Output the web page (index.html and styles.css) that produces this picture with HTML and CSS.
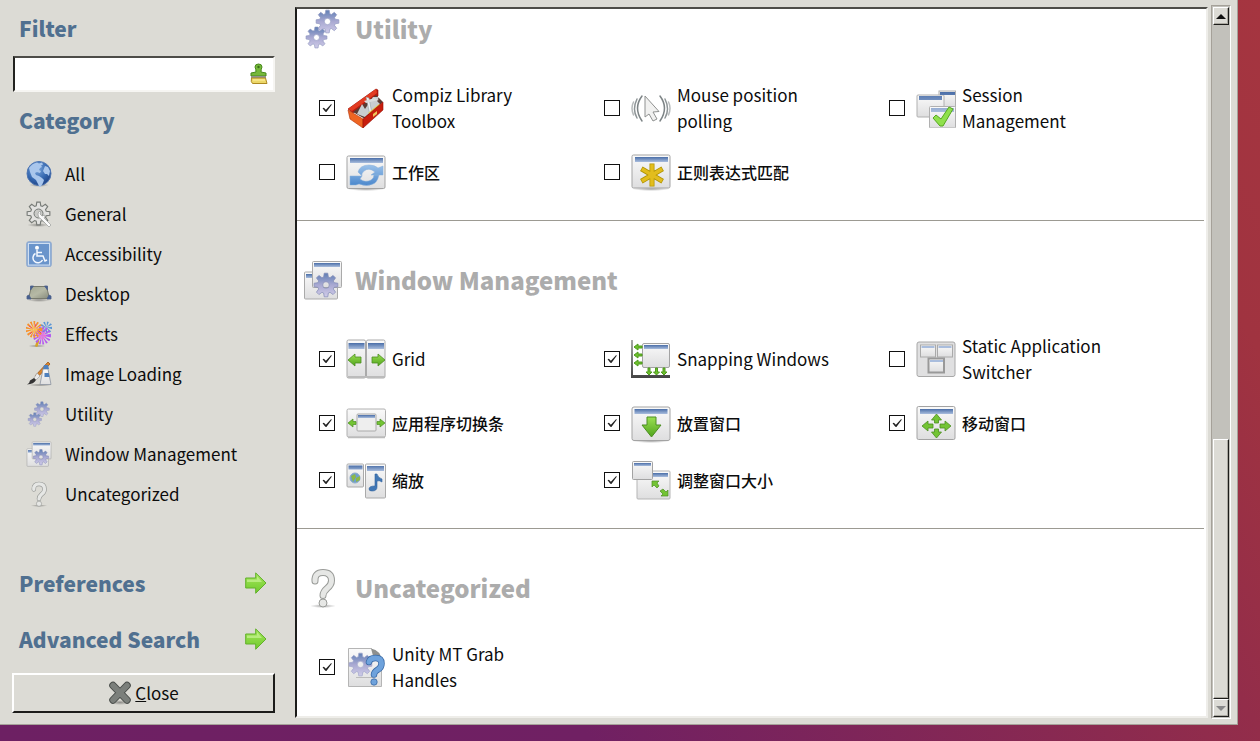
FILE: index.html
```html
<!DOCTYPE html>
<html lang="en">
<head>
<meta charset="utf-8">
<title>CompizConfig Settings Manager</title>
<link rel="stylesheet" href="styles.css">
</head>
<body>
<svg class="defs" aria-hidden="true">
  <defs>
    <linearGradient id="paper" x1="0" y1="0" x2="0" y2="1"><stop offset="0" stop-color="#fafafa"/><stop offset="1" stop-color="#dededf"/></linearGradient>
    <linearGradient id="bar" x1="0" y1="0" x2="0" y2="1"><stop offset="0" stop-color="#4a6ea8"/><stop offset="1" stop-color="#a9bddd"/></linearGradient>
    <linearGradient id="steel" x1="0" y1="0" x2="0" y2="1"><stop offset="0" stop-color="#5f7fb4"/><stop offset=".5" stop-color="#a9a9d2"/><stop offset="1" stop-color="#cfcbe8"/></linearGradient>
    <linearGradient id="green" x1="0" y1="0" x2="0" y2="1"><stop offset="0" stop-color="#9be051"/><stop offset="1" stop-color="#4fa31c"/></linearGradient>
    <linearGradient id="lime" x1="0" y1="0" x2="0" y2="1"><stop offset="0" stop-color="#a6e75c"/><stop offset="1" stop-color="#6fca2c"/></linearGradient>
    <linearGradient id="blue" x1="0" y1="0" x2="0" y2="1"><stop offset="0" stop-color="#9cc2ea"/><stop offset="1" stop-color="#4a87cc"/></linearGradient>
    <radialGradient id="sea" cx=".4" cy=".3" r=".75"><stop offset="0" stop-color="#7fa9de"/><stop offset=".6" stop-color="#3568b0"/><stop offset="1" stop-color="#1d3f80"/></radialGradient>
    <radialGradient id="shade"><stop offset="0" stop-color="#000" stop-opacity=".35"/><stop offset="1" stop-color="#000" stop-opacity="0"/></radialGradient>
    <linearGradient id="mat" x1="0" y1="0" x2="1" y2="1"><stop offset="0" stop-color="#a3a792"/><stop offset=".5" stop-color="#b6b9a5"/><stop offset="1" stop-color="#85897a"/></linearGradient>
    <linearGradient id="axis" x1="0" y1="0" x2="0" y2="1"><stop offset="0" stop-color="#aaa"/><stop offset="1" stop-color="#444"/></linearGradient>
  </defs>

  <symbol id="gear" viewBox="-11 -11 22 22"><path fill-rule="evenodd" d="M6.8-2 10-1.5V1.5L6.8 2 6.2 3.4 8.1 6 6 8.1 3.4 6.2 2 6.8 1.5 10H-1.5L-2 6.8-3.4 6.2-6 8.1-8.1 6-6.2 3.4-6.8 2-10 1.5V-1.5L-6.8-2-6.2-3.4-8.1-6-6-8.1-3.4-6.2-2-6.8-1.5-10H1.5L2-6.8 3.4-6.2 6-8.1 8.1-6 6.2-3.4ZM2.8 0A2.8 2.8 0 1 0-2.8 0 2.8 2.8 0 1 0 2.8 0Z"/></symbol>

  <symbol id="globe" viewBox="0 0 26 26">
    <ellipse cx="13" cy="24" rx="10" ry="2" fill="url(#shade)"/>
    <circle cx="13" cy="12.500" r="12" fill="url(#sea)" stroke="#4f76b3"/>
    <path fill="#a9c6ec" d="M3 7C5 4 8 2 11 1.500l2 1 3-1 1 2-2 1 1 1.500-2 1-1 2 2 1-1 2-3-1-2 1 1 2 3 1 3 2 2 2-1 3-3 5-2-4-2-4-4-3-2-5zM19 5l3 1 2 4-1 5-2-2-2 0-2-3z"/>
  </symbol>
  <symbol id="general" viewBox="0 0 26 26">
    <ellipse cx="12" cy="24" rx="11" ry="2" fill="url(#shade)"/>
    <use href="#gear" x="0" y="0" width="25" height="25" fill="#e3e3e1" stroke="#777b77" stroke-width="1"/>
    <circle cx="12.500" cy="12.500" r="4.500" fill="#c9cac7" stroke="#777b77"/>
    <path d="M10 12q0-3 3-3l-1 3 2 2 3-1q0 2-1 3l7 7-2 2-8-8q-3-1-3-5z" transform="translate(2 1)" fill="#fafafa" stroke="#999c99" stroke-width=".7"/>
  </symbol>
  <symbol id="access" viewBox="0 0 26 26">
    <rect x=".7" y=".7" width="24.600" height="25" rx="2" fill="#8fafd9" stroke="#8fa9ce"/>
    <rect x="2.500" y="2.500" width="21" height="21.500" fill="#6a94cb" stroke="#cfdef1"/>
    <circle cx="11" cy="6.800" r="2" fill="#fff"/>
    <path d="M11 9v6h6l2 5 2-1M11 11.500h5M9.500 12.500a5 5 0 1 0 7 6.500" fill="none" stroke="#f4f8ff" stroke-width="1.500"/>
  </symbol>
  <symbol id="desktop" viewBox="0 0 26 26">
    <ellipse cx="13" cy="19" rx="12" ry="2" fill="url(#shade)"/>
    <path d="M5.500 5.500h15L23.500 17.500h-21z" fill="url(#mat)" stroke="#77796c"/>
    <path d="M4.500 5h3l-3 4zM21.500 5h-3l3 4zM1 18v-3l2-1 2 4zM25 18v-3l-2-1-2 4z" fill="#465f90" stroke="#4b608a" stroke-width=".8"/>
  </symbol>
  <symbol id="effects" viewBox="0 0 26 26">
    <ellipse cx="11" cy="25" rx="9" ry="1.500" fill="url(#shade)"/>
    <path d="M10.500 24.500 12 20" stroke="#d8a426" stroke-width="2.500" stroke-linecap="round"/>
    <g fill="none">
      <circle cx="20.500" cy="6.500" r="3" stroke="#5a96d6" stroke-width="6" stroke-dasharray="1 1"/>
      <circle cx="16" cy="14.500" r="4.500" stroke="#b45af0" stroke-width="9" stroke-dasharray="1 .9"/>
      <circle cx="16" cy="14.500" r="2" stroke="#f06bd8" stroke-width="4" stroke-dasharray="1 .8"/>
      <circle cx="8" cy="8.500" r="4.200" stroke="#f7922c" stroke-width="8.400" stroke-dasharray="1 .9"/>
      <circle cx="8" cy="8.500" r="2" stroke="#ffc24a" stroke-width="3" stroke-dasharray="1 .8"/>
      <path d="M3 5l3 2M10 3l-1 3M4 13l2-2M13 10l2 2" stroke="#ea4b6a" stroke-linecap="round"/>
    </g>
  </symbol>
  <symbol id="paint" viewBox="0 0 26 26">
    <ellipse cx="14" cy="24" rx="12" ry="1.500" fill="url(#shade)"/>
    <path d="M22 1l2 2L11 17l-2-2z" fill="#d9842d" stroke="#9a5516" stroke-width=".8"/>
    <path d="M11 12l3 3-4 4-2-2z" fill="#e9e9e9" stroke="#999" stroke-width=".6"/>
    <path d="M8 17l2 2q-2 4-9 4.500 3-2 3-4z" fill="#333"/>
    <path d="M17 8l5 0 3 15.500H14z" fill="url(#paper)" stroke="#8b93a0" stroke-width=".8"/>
    <path d="M18 4h4l1 4h-6zM18.500 12h4.300l.7 4h-5z" fill="#4e80bd"/>
  </symbol>
  <symbol id="gears" viewBox="0 0 40 40">
    <g fill="url(#steel)" stroke="#8f97bf" stroke-width=".6"><use href="#gear" x="12" y="0" width="25" height="25"/><use href="#gear" x="2" y="17" width="23" height="23"/></g>
  </symbol>
  <symbol id="winmgmt" viewBox="0 0 40 40">
    <rect x="1.500" y="12" width="33" height="27" rx="1" fill="url(#paper)" stroke="#aaa"/><path d="M3 14h6v4H3z" fill="url(#bar)"/>
    <rect x="9.500" y="1.500" width="29" height="26" rx="1" fill="url(#paper)" stroke="#aaa"/><path d="M11 3h26v4H11z" fill="url(#bar)"/>
    <use href="#gear" x="10" y="12" width="26" height="26" fill="url(#steel)" stroke="#8189b5" stroke-width=".6"/>
  </symbol>
  <symbol id="question" viewBox="0 0 40 40">
    <ellipse cx="20" cy="38" rx="13" ry="2" fill="url(#shade)"/>
    <g fill="none" stroke-linecap="round" stroke-linejoin="round"><path d="M12 13q-.5-8.500 8-8.500 8.500 0 8.500 8 0 4.500-4.500 8-4 3.500-4 7" stroke="#999b98" stroke-width="7"/><path d="M12 13q-.5-8.500 8-8.500 8.500 0 8.500 8 0 4.500-4.500 8-4 3.500-4 7" stroke="#e6e7e5" stroke-width="5"/></g>
    <circle cx="20" cy="35" r="4" fill="#e6e7e5" stroke="#999b98"/>
  </symbol>
  <symbol id="arrow" viewBox="0 0 22 22"><path d="M.7 6h10V.9L21 11 10.700 21.300V16H.7z" fill="url(#lime)" stroke="#62b02b"/><path d="M2 7.500h10V4l5 6H2z" fill="#d0f7a2" opacity=".6"/></symbol>
  <symbol id="cross" viewBox="0 0 24 24">
    <ellipse cx="12" cy="21.500" rx="11" ry="2.500" fill="url(#shade)"/>
    <path d="M5 4.500 19 19M19 4.500 5 19" stroke="#484c49" stroke-width="7.500" stroke-linecap="round"/>
    <path d="M5 4.500 19 19M19 4.500 5 19" stroke="#7b7f7b" stroke-width="5.500" stroke-linecap="round"/>
  </symbol>
  <symbol id="broom" viewBox="0 0 18 22">
    <path d="M6 9q0-3-1-5Q5 1 8.500 1T12 4q-1 2-1 5l5 1v3H1v-3z" fill="#76b83a" stroke="#47891c"/><circle cx="8.500" cy="4" r="1.200" fill="#386f17"/>
    <path d="M1 13h15v2H1z" fill="#8f938c"/><path d="M1.500 15h14l1.500 5.500H2.500Q.5 19 1.500 15z" fill="#ecd768" stroke="#ad8a23"/><path d="M3 17h12" stroke="#fff2a0"/>
  </symbol>

  <symbol id="toolbox" viewBox="0 0 40 40">
    <path d="M2 21 30 1l2 1v6L7 25z" fill="#b91b0e" stroke="#8d0f06" stroke-width=".6"/><path d="M2 21 30 1l1 4L6 23z" fill="#e23c22"/>
    <path d="M7 24 30 7l7 7-18 17z" fill="#5b3c34"/>
    <path d="M13 22l3-6 3 5 8-12 6 0-2 4 3 3-15 13-8-3z" fill="#c8cdcf"/><path d="M20 9l3 1 3 16-2 1z" fill="#eef1f2" stroke="#899" stroke-width=".5"/><path d="M18 13l11-3 4 2-13 3z" fill="#d9dddd"/><path d="M22 25l11-9 2 2-10 9z" fill="#e6c84a"/>
    <path d="M2 22l15 9 0 9L4 31z" fill="#ee6522" stroke="#b33009" stroke-width=".6"/><path d="M17 31 37 14v8L17 40z" fill="#c81d0d" stroke="#930f05" stroke-width=".6"/><path d="M27 26l4-3v3l-4 3z" fill="#efc65a"/>
  </symbol>
  <symbol id="workspace" viewBox="0 0 40 40">
    <ellipse cx="20" cy="37" rx="19" ry="2" fill="url(#shade)"/>
    <rect x="1" y="4" width="38" height="32.500" rx="1.500" fill="url(#paper)" stroke="#a3a3a3"/><path d="M4 6h33v5H4z" fill="url(#bar)"/>
    <path d="M12 20q2-7 11-7 6 0 9 3l5-2v9H25l4-3q-6-5-11-1-3 3-2 5zM4 24h12l-2 3q5 4 11 1 3-2 3-5l5 0q-2 8-6 9-6 3-14 0l-3 1H4z" fill="url(#blue)" stroke="#8ab0db" stroke-width=".5"/>
  </symbol>
  <symbol id="mouse" viewBox="0 0 40 40">
    <g fill="none" stroke-linecap="round"><path d="M11 8q-9 12 0 25M29 8q9 12 0 25" stroke="#7d8486" stroke-width="1.500"/><path d="M6 11q-5 10 0 19M34 11q5 10 0 19" stroke="#8d9496" stroke-width="1.500"/><path d="M2.500 14q-3 6 0 13M37.500 14q3 6 0 13" stroke="#b7bbbc" stroke-width="1.500"/></g>
    <path d="M14 8v21l4-3 4 7 4-2-4-7 6-.5z" fill="#f1f1f0" stroke="#8f9190"/>
  </symbol>
  <symbol id="regex" viewBox="0 0 40 40">
    <ellipse cx="20" cy="37" rx="19" ry="2" fill="url(#shade)"/>
    <rect x="1" y="3" width="38" height="33" rx="1.500" fill="url(#paper)" stroke="#a3a3a3"/><path d="M4 5h33v5H4z" fill="url(#bar)"/>
    <g stroke-linecap="square"><path d="M21 14v18M12.500 18l17 10M29.500 18l-17 10" stroke="#b09300" stroke-width="5"/><path d="M21 14v18M12.500 18l17 10M29.500 18l-17 10" stroke="#e2bd1d" stroke-width="3.500"/></g>
  </symbol>
  <symbol id="session" viewBox="0 0 40 40">
    <g fill="url(#paper)" stroke="#b0b0b0"><rect x="23" y="3" width="16.500" height="16"/><rect x="1" y="7" width="27" height="22" rx="1"/><rect x="13.500" y="18.500" width="26" height="21.500" rx="1"/></g>
    <path d="M24 4h15v3H24zM3 8h23v4H3zM15 20h23v4H15z" fill="url(#bar)"/>
    <path d="M17 30l3-3 5 4 8-12 4 2-10 17h-3z" fill="#8fe04c" stroke="#55a81f"/>
  </symbol>
  <symbol id="grid" viewBox="0 0 40 40">
    <g fill="url(#paper)" stroke="#aaa"><rect x="1" y="1" width="18.500" height="38" rx="1.500"/><rect x="20.500" y="1" width="18.500" height="38" rx="1.500"/></g>
    <path d="M2.500 4h16v6h-16zM22 4h16v6H22z" fill="url(#bar)"/>
    <path d="M2 21l7-6v3h6v6H9v3zM39 21l-7-6v3h-6v6h6v3z" fill="url(#green)" stroke="#4c8e22" stroke-width=".8"/>
    <path d="M2 38h37" stroke="#bbb" stroke-width="2"/>
  </symbol>
  <symbol id="snap" viewBox="0 0 40 40">
    <path d="M0 1h2v35h37v3H0z" fill="url(#axis)"/><rect x="11.500" y="4.500" width="27" height="24" rx="1.500" fill="url(#paper)" stroke="#a3a3a3"/><path d="M13 6h24v4H13z" fill="url(#bar)"/>
    <path d="M3 8l4-3v2h4v2H7v2zM3 16l4-3v2h4v2H7v2zM3 24l4-3v2h4v2H7v2zM18 36l-3-3h2v-4h2v4h2zM25.500 36l-3-3h2v-4h2v4h2zM33 36l-3-3h2v-4h2v4h2z" fill="#6cc02c" stroke="#4f9a1d"/>
  </symbol>
  <symbol id="static" viewBox="0 0 40 40">
    <rect x="1" y="3" width="38" height="34.500" rx="2" fill="#e0e0e1" stroke="#a8a8a8"/>
    <g fill="url(#paper)" stroke="#aaa"><rect x="4.500" y="6" width="15" height="12"/><rect x="21.500" y="6" width="15" height="12"/><rect x="12.500" y="19.500" width="15.500" height="14" stroke="#999" stroke-width="2"/></g>
    <path d="M5.500 7h13v2h-13zM22.500 7h13v2h-13zM14 21h13v2H14z" fill="#a9bddd"/>
  </symbol>
  <symbol id="switcher" viewBox="0 0 40 40">
    <rect x="1" y="6" width="38.500" height="28" rx="1.500" fill="url(#paper)" stroke="#b0b0b0"/><path d="M2 34.500h37" stroke="#bbb" stroke-width="1.500"/>
    <rect x="11" y="11" width="19" height="17" rx="1" fill="#eee" stroke="#aaa"/><path d="M12 12h17v3H12z" fill="url(#bar)"/>
    <path d="M2 20l5-4v2.500h3v3H7V24zM39 20l-5-4v2.500h-3v3h3V24z" fill="#73c434" stroke="#4c8e22" stroke-width=".7"/>
  </symbol>
  <symbol id="place" viewBox="0 0 40 40">
    <ellipse cx="20" cy="38" rx="19" ry="2" fill="url(#shade)"/>
    <rect x="1" y="4" width="38" height="33.500" rx="2" fill="url(#paper)" stroke="#a3a3a3"/><path d="M3.500 6h33v5h-33z" fill="url(#bar)"/>
    <path d="M16 14h9v8h5L20.500 34 11 22h5z" fill="url(#green)" stroke="#4c8e22"/>
  </symbol>
  <symbol id="move" viewBox="0 0 40 40">
    <rect x="1" y="3.500" width="38" height="33" rx="1.500" fill="url(#paper)" stroke="#a3a3a3"/><path d="M4 6h33v5H4z" fill="url(#bar)"/>
    <path d="M20.500 11l5 6h-3v3h-4v-3h-3zM20.500 35l5-6h-3v-3h-4v3h-3zM6 23l6-5v3h5v4h-5v3zM35 23l-6-5v3h-5v4h5v3z" fill="#73c434" stroke="#4c8e22" stroke-width=".8"/>
  </symbol>
  <symbol id="scale" viewBox="0 0 40 40">
    <g fill="url(#paper)" stroke="#aaa"><rect x="1" y="4" width="16.500" height="23" rx="1"/><rect x="19.500" y="4" width="20" height="34" rx="1"/></g>
    <path d="M2.500 5.500h14v4h-14zM21 6h17v5H21z" fill="url(#bar)"/>
    <circle cx="9" cy="18" r="5" fill="#6f9fce" stroke="#8dacca"/><path d="M5 16l4-2 1 3-3 5zM10 18l4-2v4l-4 2z" fill="#8cb848"/>
    <path d="M29 14h2q1 4 5 5v3q-3-2-5-1v6q0 4-5 4-3 0-3-2 0-3 6-3z" fill="#4177b5" stroke="#2f619e" stroke-width=".6"/>
  </symbol>
  <symbol id="resize" viewBox="0 0 40 40">
    <rect x="6" y="11" width="33" height="28" rx="1" fill="url(#paper)" stroke="#b5b5b5"/><path d="M22 13h15v4H22z" fill="url(#bar)"/>
    <rect x="1.500" y="1.500" width="20" height="18" rx="1" fill="url(#paper)" stroke="#a3a3a3"/><path d="M3 3h17v3H3z" fill="url(#bar)"/>
    <path d="M21 21h7l-2 2 2 3-2 2-3-3-2 2zM37 36h-7l2-2-3-3 3-2 3 3 2-2z" fill="#73c434" stroke="#4c8e22" stroke-width=".7"/>
  </symbol>
  <symbol id="plugin" viewBox="0 0 40 40">
    <path d="M2.500 1.500h23l10 10v28h-33z" fill="url(#paper)" stroke="#b5b5b5"/><path d="M25 1.500q10 2 10.500 12l-8-3z" fill="#8e908e"/>
    <path d="M10 30.500h17" stroke="#bbb"/>
    <use href="#gear" x="2" y="5" width="25" height="25" fill="url(#steel)" stroke="#9fa4cb" stroke-width=".6"/>
    <g fill="none" stroke-linecap="round"><path d="M23 15q1-4 6.500-4 6 0 6 5.500 0 4-3.500 6-4 2.500-4 5" stroke="#3768a5" stroke-width="6.500"/><path d="M23 15q1-4 6.500-4 6 0 6 5.500 0 4-3.500 6-4 2.500-4 5" stroke="#6ea2dc" stroke-width="5"/></g>
    <circle cx="28" cy="35" r="3.200" fill="#6ea2dc" stroke="#3768a5" stroke-width=".8"/>
  </symbol>
</svg>

<div class="window">
  <aside class="sidebar">
    <h2 class="side-title"><label for="filter">Filter</label></h2>
    <div class="field">
      <input class="field-input" id="filter" type="text">
      <button class="field-clear" type="button" aria-label="Clear"><svg class="icon-clear"><use href="#broom"/></svg></button>
    </div>
    <h2 class="side-title category-title">Category</h2>
    <nav class="categories">
      <a class="category" href="#all"><svg class="icon-small"><use href="#globe"/></svg>All</a>
      <a class="category" href="#general-plugins"><svg class="icon-small"><use href="#general"/></svg>General</a>
      <a class="category" href="#accessibility"><svg class="icon-small"><use href="#access"/></svg>Accessibility</a>
      <a class="category" href="#desktop-plugins"><svg class="icon-small"><use href="#desktop"/></svg>Desktop</a>
      <a class="category" href="#effect-plugins"><svg class="icon-small"><use href="#effects"/></svg>Effects</a>
      <a class="category" href="#image-loading"><svg class="icon-small"><use href="#paint"/></svg>Image Loading</a>
      <a class="category" href="#utility"><svg class="icon-small"><use href="#gears"/></svg>Utility</a>
      <a class="category" href="#window-management"><svg class="icon-small"><use href="#winmgmt"/></svg>Window Management</a>
      <a class="category" href="#uncategorized"><svg class="icon-small"><use href="#question"/></svg>Uncategorized</a>
    </nav>
    <div class="side-links">
      <a class="side-link" href="#preferences">Preferences<svg class="icon-arrow"><use href="#arrow"/></svg></a>
      <a class="side-link" href="#advanced">Advanced Search<svg class="icon-arrow"><use href="#arrow"/></svg></a>
    </div>
    <button class="close" type="button"><svg class="icon-close"><use href="#cross"/></svg><span><u>C</u>lose</span></button>
  </aside>

  <main class="viewport">
    <section class="group" id="utility">
      <h2 class="group-title"><svg class="icon"><use href="#gears"/></svg>Utility</h2>
      <div class="plugins">
        <div class="plugin"><input class="check" type="checkbox" id="p1" checked><label class="plugin-label" for="p1"><svg class="icon"><use href="#toolbox"/></svg><span class="name">Compiz Library Toolbox</span></label></div>
        <div class="plugin"><input class="check" type="checkbox" id="p2"><label class="plugin-label" for="p2"><svg class="icon"><use href="#mouse"/></svg><span class="name">Mouse position polling</span></label></div>
        <div class="plugin"><input class="check" type="checkbox" id="p3"><label class="plugin-label" for="p3"><svg class="icon"><use href="#session"/></svg><span class="name">Session Management</span></label></div>
        <div class="plugin"><input class="check" type="checkbox" id="p4"><label class="plugin-label" for="p4"><svg class="icon"><use href="#workspace"/></svg><span class="name" lang="zh-CN">工作区</span></label></div>
        <div class="plugin"><input class="check" type="checkbox" id="p5"><label class="plugin-label" for="p5"><svg class="icon"><use href="#regex"/></svg><span class="name" lang="zh-CN">正则表达式匹配</span></label></div>
      </div>
    </section>
    <section class="group" id="window-management">
      <h2 class="group-title"><svg class="icon"><use href="#winmgmt"/></svg>Window Management</h2>
      <div class="plugins">
        <div class="plugin"><input class="check" type="checkbox" id="p6" checked><label class="plugin-label" for="p6"><svg class="icon"><use href="#grid"/></svg><span class="name">Grid</span></label></div>
        <div class="plugin"><input class="check" type="checkbox" id="p7" checked><label class="plugin-label" for="p7"><svg class="icon"><use href="#snap"/></svg><span class="name">Snapping Windows</span></label></div>
        <div class="plugin"><input class="check" type="checkbox" id="p8"><label class="plugin-label" for="p8"><svg class="icon"><use href="#static"/></svg><span class="name">Static Application Switcher</span></label></div>
        <div class="plugin"><input class="check" type="checkbox" id="p9" checked><label class="plugin-label" for="p9"><svg class="icon"><use href="#switcher"/></svg><span class="name" lang="zh-CN">应用程序切换条</span></label></div>
        <div class="plugin"><input class="check" type="checkbox" id="p10" checked><label class="plugin-label" for="p10"><svg class="icon"><use href="#place"/></svg><span class="name" lang="zh-CN">放置窗口</span></label></div>
        <div class="plugin"><input class="check" type="checkbox" id="p11" checked><label class="plugin-label" for="p11"><svg class="icon"><use href="#move"/></svg><span class="name" lang="zh-CN">移动窗口</span></label></div>
        <div class="plugin"><input class="check" type="checkbox" id="p12" checked><label class="plugin-label" for="p12"><svg class="icon"><use href="#scale"/></svg><span class="name" lang="zh-CN">缩放</span></label></div>
        <div class="plugin"><input class="check" type="checkbox" id="p13" checked><label class="plugin-label" for="p13"><svg class="icon"><use href="#resize"/></svg><span class="name" lang="zh-CN">调整窗口大小</span></label></div>
      </div>
    </section>
    <section class="group" id="uncategorized">
      <h2 class="group-title"><svg class="icon"><use href="#question"/></svg>Uncategorized</h2>
      <div class="plugins">
        <div class="plugin"><input class="check" type="checkbox" id="p14" checked><label class="plugin-label" for="p14"><svg class="icon"><use href="#plugin"/></svg><span class="name">Unity MT Grab Handles</span></label></div>
      </div>
    </section>
  </main>

  <div class="scrollbar">
    <button class="scroll-button" type="button" aria-label="Scroll up"><span class="up"></span></button>
    <div class="track"></div>
    <div class="thumb"></div>
    <button class="scroll-button" type="button" aria-label="Scroll down"><span class="down"></span></button>
  </div>
</div>
</body>
</html>
```
FILE: styles.css
```css
* {
  box-sizing: border-box;
}

body {
  margin: 0;
  min-height: 100vh;
  display: flex;
  padding: 0 22px 16px 0;
  background: linear-gradient(60deg, #6d2063 0%, #702063 35%, #932d4a 75%, #a03340 88%, #a53540 100%);
  font-family: "Noto Sans CJK SC", sans-serif;
  font-size: 17px;
  line-height: 26px;
  color: #0c0c0c;
}

.defs {
  position: absolute;
  width: 0;
  height: 0;
}

.window {
  flex: 1;
  display: flex;
  padding: 5px 6px 5px 12px;
  background: #dcdbd5;
  border-right: 1px solid #a5a199;
  border-bottom: 1px solid #a5a199;
}

/* Sidebar */

.sidebar {
  flex: 0 0 263px;
  display: flex;
  flex-direction: column;
  margin-right: 20px;
  padding: 7px 0 6px;
}

.side-title,
.side-link {
  margin: 0;
  padding-left: 7px;
  font-size: 21px;
  line-height: 32px;
  font-weight: 900;
  color: #507090;
}

.field {
  display: flex;
  align-items: center;
  height: 36px;
  margin-top: 12px;
  margin-left: 1px;
  padding-right: 5px;
  background: #fff;
  border: 2px solid;
  border-color: #4d4c48 #f6f5f2 #f6f5f2 #22221f;
}

.field-input {
  flex: 1;
  min-width: 0;
  border: 0;
  padding: 0 4px;
  font: inherit;
  background: none;
  outline: 0;
}

.field-clear {
  display: flex;
  padding: 0;
  border: 0;
  background: none;
}

.icon-clear {
  width: 18px;
  height: 22px;
}

.category-title {
  margin-top: 12px;
}

.categories {
  display: flex;
  flex-direction: column;
  margin-top: 18px;
}

.category {
  display: flex;
  align-items: center;
  gap: 13px;
  height: 40px;
  padding-left: 14px;
  color: inherit;
  text-decoration: none;
}

.icon-small {
  width: 26px;
  height: 26px;
}

.side-links {
  display: flex;
  flex-direction: column;
  gap: 24px;
  margin-top: auto;
  margin-bottom: 18px;
}

.side-link {
  display: flex;
  align-items: center;
  justify-content: space-between;
  padding-right: 8px;
  text-decoration: none;
}

.icon-arrow {
  width: 22px;
  height: 22px;
}

.close {
  display: flex;
  align-items: center;
  justify-content: center;
  gap: 3px;
  height: 40px;
  padding: 0;
  border: 2px solid;
  border-color: #fff #1c1c1a #1c1c1a #fff;
  background: #dcdbd5;
  color: inherit;
  font: inherit;
}

.icon-close {
  width: 24px;
  height: 24px;
}

/* Plugin list */

.viewport {
  flex: 1;
  min-width: 0;
  margin: 2px 3px 1px 0;
  padding-right: 2px;
  background: #fff;
  border: 2px solid;
  border-color: #4d4c48 #eeede9 #eeede9 #1c1c1a;
}

.group + .group {
  margin-top: 29px;
  padding-top: 39px;
  border-top: 1px solid #9c9a92;
}

.group-title {
  display: flex;
  align-items: center;
  gap: 12px;
  margin: 0;
  padding: 1px 0 0 6px;
  font-size: 24px;
  line-height: 38px;
  font-weight: 900;
  color: #acacac;
}

.icon {
  flex: none;
  width: 40px;
  height: 40px;
  margin-block: -1px;
}

.plugins {
  display: grid;
  grid-template-columns: repeat(3, 1fr);
  gap: 19px 0;
  margin-top: 34px;
  padding: 0 30px 0 22px;
}

.plugin {
  display: flex;
  align-items: center;
  gap: 11px;
}

.check {
  appearance: none;
  flex: none;
  width: 16px;
  height: 16px;
  margin: 0;
  border: 1px solid #111;
  background: #fff;
}

.check:checked::before {
  content: "";
  display: block;
  width: 14px;
  height: 14px;
  background: #222;
  clip-path: polygon(18% 52%, 28% 48%, 42% 62%, 80% 22%, 84% 26%, 46% 78%, 38% 76%);
}

.plugin-label {
  display: flex;
  align-items: center;
  gap: 6px;
}

.name {
  max-width: 160px;
}

.name:lang(zh) {
  font-size: 16px;
  font-weight: 500;
}

/* Scrollbar */

.scrollbar {
  flex: 0 0 20px;
  display: flex;
  flex-direction: column;
  padding: 1px;
  background: #c2c1bb;
  border: 1px solid;
  border-color: #a5a199 #fff #fff #a5a199;
}

.scroll-button,
.thumb {
  border: 1px solid;
  border-color: #fff #1c1c1a #1c1c1a #fff;
  box-shadow: inset -1px -1px #aaa8a0;
  background: #dcdbd5;
}

.scroll-button {
  display: flex;
  align-items: center;
  justify-content: center;
  height: 18px;
  padding: 0;
}

.track {
  flex: 416;
}

.thumb {
  flex: 260;
}

.up,
.down {
  border: 5px solid transparent;
}

.up {
  border-top-width: 0;
  border-bottom-color: #111;
}

.down {
  border-bottom-width: 0;
  border-top-color: #888;
}
```
